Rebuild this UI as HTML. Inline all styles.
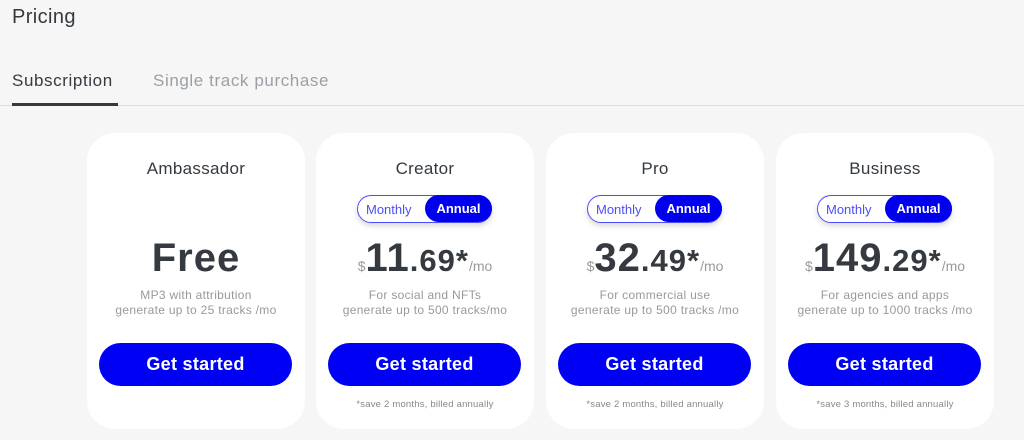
<!DOCTYPE html>
<html><head><style>
*{margin:0;padding:0;box-sizing:border-box}
body{width:1024px;height:440px;background:#f6f6f6;font-family:"Liberation Sans",sans-serif;position:relative;overflow:hidden;color:#343a40}
.t{position:absolute;left:12px;top:6px;font-size:20px;color:#343a40;letter-spacing:0.4px}
.tab{position:absolute;top:71px;font-size:17px;letter-spacing:0.6px}
.line{position:absolute;left:0;right:0;top:105px;height:1px;background:#dcdcdc}
.ul{position:absolute;left:12px;top:103px;width:106px;height:3px;background:#343a40}
.card{position:absolute;top:133px;width:218px;height:296px;background:#fff;border-radius:28px;text-align:center}
.name{position:absolute;top:26px;left:0;right:0;font-size:17px;color:#343a40;letter-spacing:0.3px}
.tog{position:absolute;top:62px;left:41px;width:135px;height:28px;border:1.5px solid #4d4dff;border-radius:14px;box-shadow:0 3px 6px rgba(0,0,0,.15);font-size:13px}
.tog .m{position:absolute;left:8px;top:6px;color:#4d4dff}
.tog .a{position:absolute;right:-1px;top:-1px;width:67px;height:27px;background:#0000ee;border-radius:14px;color:#fff;font-weight:bold;line-height:27px}
.price{position:absolute;top:103px;left:0;right:0;white-space:nowrap;font-weight:bold;color:#343a40;letter-spacing:1px}
.big{font-size:40px}.mid{font-size:31px}.sm{font-size:14px;color:#999;font-weight:normal;letter-spacing:0}
.desc{position:absolute;top:155px;left:0;right:0;font-size:12px;line-height:15px;color:#999;letter-spacing:0.3px}
.btn{position:absolute;top:210px;left:12px;width:193px;height:43px;background:#0000f5;border-radius:22px;color:#fff;font-size:18px;line-height:43px;font-weight:bold;letter-spacing:0.3px}
.fn{position:absolute;top:266px;left:0;right:0;font-size:9.5px;color:#888;letter-spacing:0.2px}
</style></head><body>
<div class="t">Pricing</div>
<div class="tab" style="left:12px;color:#343a40">Subscription</div>
<div class="tab" style="left:153px;color:#9aa0a6">Single track purchase</div>
<div class="line"></div><div class="ul"></div>

<div class="card" style="left:87px">
<div class="name">Ambassador</div>
<div class="price"><span class="big">Free</span></div>
<div class="desc">MP3 with attribution<br>generate up to 25 tracks /mo</div>
<div class="btn">Get started</div>
</div>

<div class="card" style="left:316px">
<div class="name">Creator</div>
<div class="tog"><span class="m">Monthly</span><span class="a">Annual</span></div>
<div class="price"><span class="sm">$</span><span class="big">11</span><span class="mid">.69*</span><span class="sm">/mo</span></div>
<div class="desc">For social and NFTs<br>generate up to 500 tracks/mo</div>
<div class="btn">Get started</div>
<div class="fn">*save 2 months, billed annually</div>
</div>

<div class="card" style="left:546px">
<div class="name">Pro</div>
<div class="tog"><span class="m">Monthly</span><span class="a">Annual</span></div>
<div class="price"><span class="sm">$</span><span class="big">32</span><span class="mid">.49*</span><span class="sm">/mo</span></div>
<div class="desc">For commercial use<br>generate up to 500 tracks /mo</div>
<div class="btn">Get started</div>
<div class="fn">*save 2 months, billed annually</div>
</div>

<div class="card" style="left:776px">
<div class="name">Business</div>
<div class="tog"><span class="m">Monthly</span><span class="a">Annual</span></div>
<div class="price"><span class="sm">$</span><span class="big">149</span><span class="mid">.29*</span><span class="sm">/mo</span></div>
<div class="desc">For agencies and apps<br>generate up to 1000 tracks /mo</div>
<div class="btn">Get started</div>
<div class="fn">*save 3 months, billed annually</div>
</div>
</body></html>
